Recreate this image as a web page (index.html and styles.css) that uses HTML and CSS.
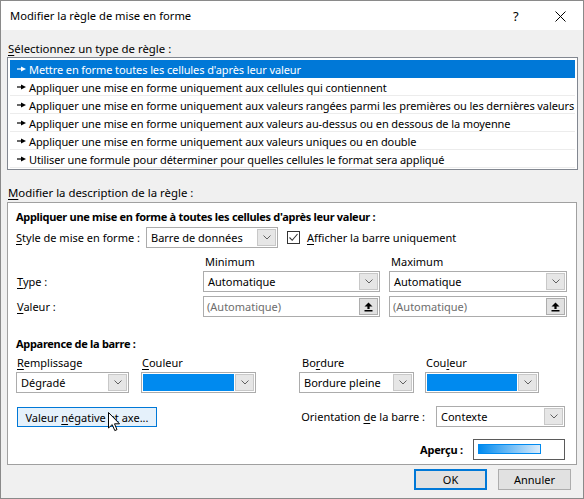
FILE: index.html
```html
<!DOCTYPE html>
<html lang="fr">
<head>
<meta charset="utf-8">
<title>Modifier la règle de mise en forme</title>
<link rel="stylesheet" href="styles.css">
</head>
<body>
<div class="dialog">
  <div class="titlebar">
    <span class="title">Modifier la règle de mise en forme</span>
    <span class="help">?</span>
    <svg class="close" width="11" height="11" viewBox="0 0 11 11"><path d="M0.5 0.5 L10.5 10.5 M10.5 0.5 L0.5 10.5" stroke="#000" stroke-width="1" fill="none"/></svg>
  </div>
  <div class="content">
    <div class="section-label label-first"><u>S</u>électionnez un type de règle :</div>
    <div class="listbox">
      <div class="item selected"><svg class="arrow" width="9" height="8" viewBox="0 0 9 8"><path d="M0 4 H5" stroke="currentColor" stroke-width="1.2"/><path d="M4 1.5 L9 4 L4 6.5 Z" fill="currentColor"/></svg>Mettre en forme toutes les cellules d'après leur valeur</div>
      <div class="item"><svg class="arrow" width="9" height="8" viewBox="0 0 9 8"><path d="M0 4 H5" stroke="currentColor" stroke-width="1.2"/><path d="M4 1.5 L9 4 L4 6.5 Z" fill="currentColor"/></svg>Appliquer une mise en forme uniquement aux cellules qui contiennent</div>
      <div class="item"><svg class="arrow" width="9" height="8" viewBox="0 0 9 8"><path d="M0 4 H5" stroke="currentColor" stroke-width="1.2"/><path d="M4 1.5 L9 4 L4 6.5 Z" fill="currentColor"/></svg>Appliquer une mise en forme uniquement aux valeurs rangées parmi les premières ou les dernières valeurs</div>
      <div class="item"><svg class="arrow" width="9" height="8" viewBox="0 0 9 8"><path d="M0 4 H5" stroke="currentColor" stroke-width="1.2"/><path d="M4 1.5 L9 4 L4 6.5 Z" fill="currentColor"/></svg>Appliquer une mise en forme uniquement aux valeurs au-dessus ou en dessous de la moyenne</div>
      <div class="item"><svg class="arrow" width="9" height="8" viewBox="0 0 9 8"><path d="M0 4 H5" stroke="currentColor" stroke-width="1.2"/><path d="M4 1.5 L9 4 L4 6.5 Z" fill="currentColor"/></svg>Appliquer une mise en forme uniquement aux valeurs uniques ou en double</div>
      <div class="item"><svg class="arrow" width="9" height="8" viewBox="0 0 9 8"><path d="M0 4 H5" stroke="currentColor" stroke-width="1.2"/><path d="M4 1.5 L9 4 L4 6.5 Z" fill="currentColor"/></svg>Utiliser une formule pour déterminer pour quelles cellules le format sera appliqué</div>
    </div>
    <div class="section-label label-second"><u>M</u>odifier la description de la règle :</div>
    <div class="panel">
      <div class="heading heading-first">Appliquer une mise en forme à toutes les cellules d'après leur valeur :</div>
      <div class="style-row">
        <span class="style-label"><u>S</u>tyle de mise en forme :</span>
        <div class="combo style-combo"><span class="combo-text">Barre de données</span><span class="combo-btn"><svg width="8" height="5" viewBox="0 0 8 5"><path d="M0.5 0.5 L4 4 L7.5 0.5" stroke="#606060" fill="none"/></svg></span></div>
        <span class="checkbox"><svg width="11" height="11" viewBox="0 0 11 11"><path d="M1.5 5.5 L4.2 8.3 L9.5 2" stroke="#333" stroke-width="1.1" fill="none"/></svg></span>
        <span class="check-label"><u>A</u>fficher la barre uniquement</span>
      </div>
      <div class="minmax">
        <div></div>
        <div class="colhead">Minimum</div>
        <div class="colhead">Maximum</div>
        <div class="row-label"><u>T</u>ype :</div>
        <div class="combo"><span class="combo-text">Automatique</span><span class="combo-btn"><svg width="8" height="5" viewBox="0 0 8 5"><path d="M0.5 0.5 L4 4 L7.5 0.5" stroke="#606060" fill="none"/></svg></span></div>
        <div class="combo"><span class="combo-text">Automatique</span><span class="combo-btn"><svg width="8" height="5" viewBox="0 0 8 5"><path d="M0.5 0.5 L4 4 L7.5 0.5" stroke="#606060" fill="none"/></svg></span></div>
        <div class="row-label"><u>V</u>aleur :</div>
        <div class="input"><span class="input-text">(Automatique)</span><span class="ref-btn"><svg width="9" height="10" viewBox="0 0 9 10"><path d="M4.5 0.5 L8.5 4.5 H5.6 V7 H3.4 V4.5 H0.5 Z" fill="#000"/><rect x="0.5" y="8" width="8" height="1.5" fill="#000"/></svg></span></div>
        <div class="input"><span class="input-text">(Automatique)</span><span class="ref-btn"><svg width="9" height="10" viewBox="0 0 9 10"><path d="M4.5 0.5 L8.5 4.5 H5.6 V7 H3.4 V4.5 H0.5 Z" fill="#000"/><rect x="0.5" y="8" width="8" height="1.5" fill="#000"/></svg></span></div>
      </div>
      <div class="heading heading-second">Apparence de la barre :</div>
      <div class="appearance">
        <div class="field field-fill">
          <div class="field-label"><u>R</u>emplissage</div>
          <div class="combo"><span class="combo-text">Dégradé</span><span class="combo-btn"><svg width="8" height="5" viewBox="0 0 8 5"><path d="M0.5 0.5 L4 4 L7.5 0.5" stroke="#606060" fill="none"/></svg></span></div>
        </div>
        <div class="field field-color1">
          <div class="field-label"><u>C</u>ouleur</div>
          <div class="combo"><span class="swatch"></span><span class="combo-btn"><svg width="8" height="5" viewBox="0 0 8 5"><path d="M0.5 0.5 L4 4 L7.5 0.5" stroke="#606060" fill="none"/></svg></span></div>
        </div>
        <div class="field field-border">
          <div class="field-label">Bo<u>r</u>dure</div>
          <div class="combo"><span class="combo-text">Bordure pleine</span><span class="combo-btn"><svg width="8" height="5" viewBox="0 0 8 5"><path d="M0.5 0.5 L4 4 L7.5 0.5" stroke="#606060" fill="none"/></svg></span></div>
        </div>
        <div class="field field-color2">
          <div class="field-label">Cou<u>l</u>eur</div>
          <div class="combo"><span class="swatch"></span><span class="combo-btn"><svg width="8" height="5" viewBox="0 0 8 5"><path d="M0.5 0.5 L4 4 L7.5 0.5" stroke="#606060" fill="none"/></svg></span></div>
        </div>
      </div>
      <div class="neg-row">
        <button class="neg-btn">Valeur <u>n</u>égative et axe...</button>
        <span class="orient-label">Orientation <u>d</u>e la barre :</span>
        <div class="combo orient-combo"><span class="combo-text">Contexte</span><span class="combo-btn"><svg width="8" height="5" viewBox="0 0 8 5"><path d="M0.5 0.5 L4 4 L7.5 0.5" stroke="#606060" fill="none"/></svg></span></div>
      </div>
      <div class="preview-row">
        <span class="preview-label">Aperçu :</span>
        <div class="preview"><div class="preview-bar"></div></div>
      </div>
      <svg class="cursor" width="13" height="20" viewBox="0 0 13 20"><path d="M0.5 0.5 V16 L4.2 12.6 L6.8 18.6 L9 17.6 L6.5 11.8 L11.5 11.8 Z" fill="#fff" stroke="#000" stroke-width="1" stroke-linejoin="miter"/></svg>
    </div>
    <div class="footer">
      <button class="btn btn-default">OK</button>
      <button class="btn">Annuler</button>
    </div>
  </div>
</div>
</body>
</html>
```
FILE: styles.css
```css
* { box-sizing: border-box; }
html, body { margin: 0; padding: 0; }
body {
  font-family: "Noto Sans", "Open Sans", sans-serif;
  font-size: 11px;
  color: #000;
  background: #fff;
}
u { text-decoration: underline; text-underline-offset: 2px; text-decoration-thickness: 1px; }

.dialog {
  width: 584px;
  height: 499px;
  border: 1px solid #8a8a8a;
  background: #f0f0f0;
  display: flex;
  flex-direction: column;
}

.titlebar {
  height: 29px;
  background: #fff;
  display: flex;
  align-items: center;
  padding-left: 9px;
  flex: none;
}
.title { font-size: 11.2px; }
.help { margin-left: auto; font-size: 13px; width: 9px; margin-right: -2px; }
.close { margin-left: 35px; margin-right: 17px; margin-top: 1px; }

.content { padding: 0 6px; flex: 1; display: flex; flex-direction: column; }

.section-label { line-height: 16px; padding-left: 1px; font-size: 11.4px; white-space: nowrap; }
.label-first { margin-top: 11px; }
.label-second { margin-top: 15px; }

.listbox {
  margin-top: 0;
  width: 571px;
  background: #fff;
  border: 1px solid #828790;
  padding: 2px 2px 1px 2px;
}
.item {
  height: 18px;
  display: flex;
  align-items: center;
  padding-left: 7px;
  padding-top: 1px;
  border-bottom: 1px solid #ececec;
  white-space: nowrap;
  letter-spacing: -0.1px;
  color: #000;
}
.item.selected { background: #0078d7; color: #fff; border-bottom-color: #0078d7; }
.arrow { margin-right: 3px; flex: none; margin-top: -1px; }

.panel {
  position: relative;
  margin-top: 1px;
  width: 570px;
  height: 263px;
  background: #fff;
  border: 1px solid #a0a0a0;
  padding: 0 10px 0 8px;
}

.heading { font-weight: bold; line-height: 16px; letter-spacing: -0.3px; white-space: nowrap; }
.heading-first { margin-top: 6px; }
.heading-second { margin-top: 19px; }

.style-row { display: flex; align-items: center; height: 21px; margin-top: 2px; }
.style-label { width: 130px; flex: none; white-space: nowrap; }
.style-combo { width: 132px; flex: none; }
.checkbox {
  width: 13px; height: 13px;
  border: 1px solid #333;
  margin-left: 9px;
  display: flex; align-items: center; justify-content: center;
  background: #fff;
}
.check-label { margin-left: 7px; white-space: nowrap; }

.combo {
  height: 21px;
  border: 1px solid #acacac;
  background: #fff;
  display: flex;
  align-items: stretch;
}
.combo-text { flex: 1; padding-left: 4px; line-height: 19px; white-space: nowrap; overflow: hidden; }
.combo-btn {
  width: 19px;
  flex: none;
  margin: 1px;
  background: #e6e6e6;
  border: 1px solid #c8c8c8;
  display: flex; align-items: center; justify-content: center;
}

.minmax {
  margin-top: 6px;
  display: grid;
  grid-template-columns: 178px 177px 178px;
  grid-template-rows: 17px 25px 21px;
  column-gap: 9px;
  align-items: start;
}
.colhead { line-height: 16px; padding-left: 2px; }
.row-label { line-height: 21px; padding-left: 1px; }

.input {
  height: 21px;
  border: 1px solid #acacac;
  background: #fff;
  display: flex;
  align-items: stretch;
}
.input-text { flex: 1; padding-left: 3px; line-height: 19px; color: #6d6d6d; }
.ref-btn {
  width: 19px;
  flex: none;
  margin: 1px;
  background: #e1e1e1;
  border: 1px solid #adadad;
  display: flex; align-items: center; justify-content: center;
}

.appearance { display: flex; margin-top: 3px; }
.field { flex: none; display: flex; flex-direction: column; }
.field-label { line-height: 16px; padding-left: 1px; margin-bottom: 1px; }
.field-fill { width: 113px; }
.field-color1 { width: 115px; margin-left: 12px; }
.field-border { width: 115px; margin-left: 43px; }
.field-color2 { width: 114px; margin-left: 11px; }
.field-border .field-label { padding-left: 3px; }
.swatch { flex: 1; background: #008aef; margin: 1px 0 1px 1px; }

.neg-row { display: flex; align-items: center; height: 21px; margin-top: 13px; }
.neg-btn {
  width: 140px;
  height: 20px;
  margin-left: 1px;
  margin-top: 1px;
  background: #e5f1fb;
  border: 1px solid #0078d7;
  font-family: inherit;
  font-size: 11px;
  color: #000;
  padding: 0;
}
.orient-label { margin-left: auto; margin-right: 11px; white-space: nowrap; }
.orient-combo { width: 129px; flex: none; margin-right: 1px; }

.preview-row {
  display: flex;
  justify-content: flex-end;
  align-items: center;
  margin-top: 12px;
  height: 21px;
}
.preview-label { font-weight: bold; margin-right: 10px; letter-spacing: -0.2px; }
.preview {
  width: 92px;
  height: 21px;
  border: 1px solid #5a5a5a;
  background: #fff;
  margin-right: 1px;
  padding: 4px 0 0 4px;
}
.preview-bar {
  width: 63px;
  height: 10px;
  border: 1px solid #008aef;
  background: linear-gradient(to right, #008aef, #dcecfb);
}

.cursor { position: absolute; left: 100px; top: 209px; }

.footer {
  display: flex;
  justify-content: flex-end;
  gap: 11px;
  margin-top: 4px;
  padding-right: 6px;
}
.btn {
  width: 73px;
  height: 21px;
  background: #e1e1e1;
  border: 1px solid #adadad;
  font-family: inherit;
  font-size: 11px;
  color: #000;
  padding: 0;
}
.btn-default { border: 2px solid #0078d7; }
```
